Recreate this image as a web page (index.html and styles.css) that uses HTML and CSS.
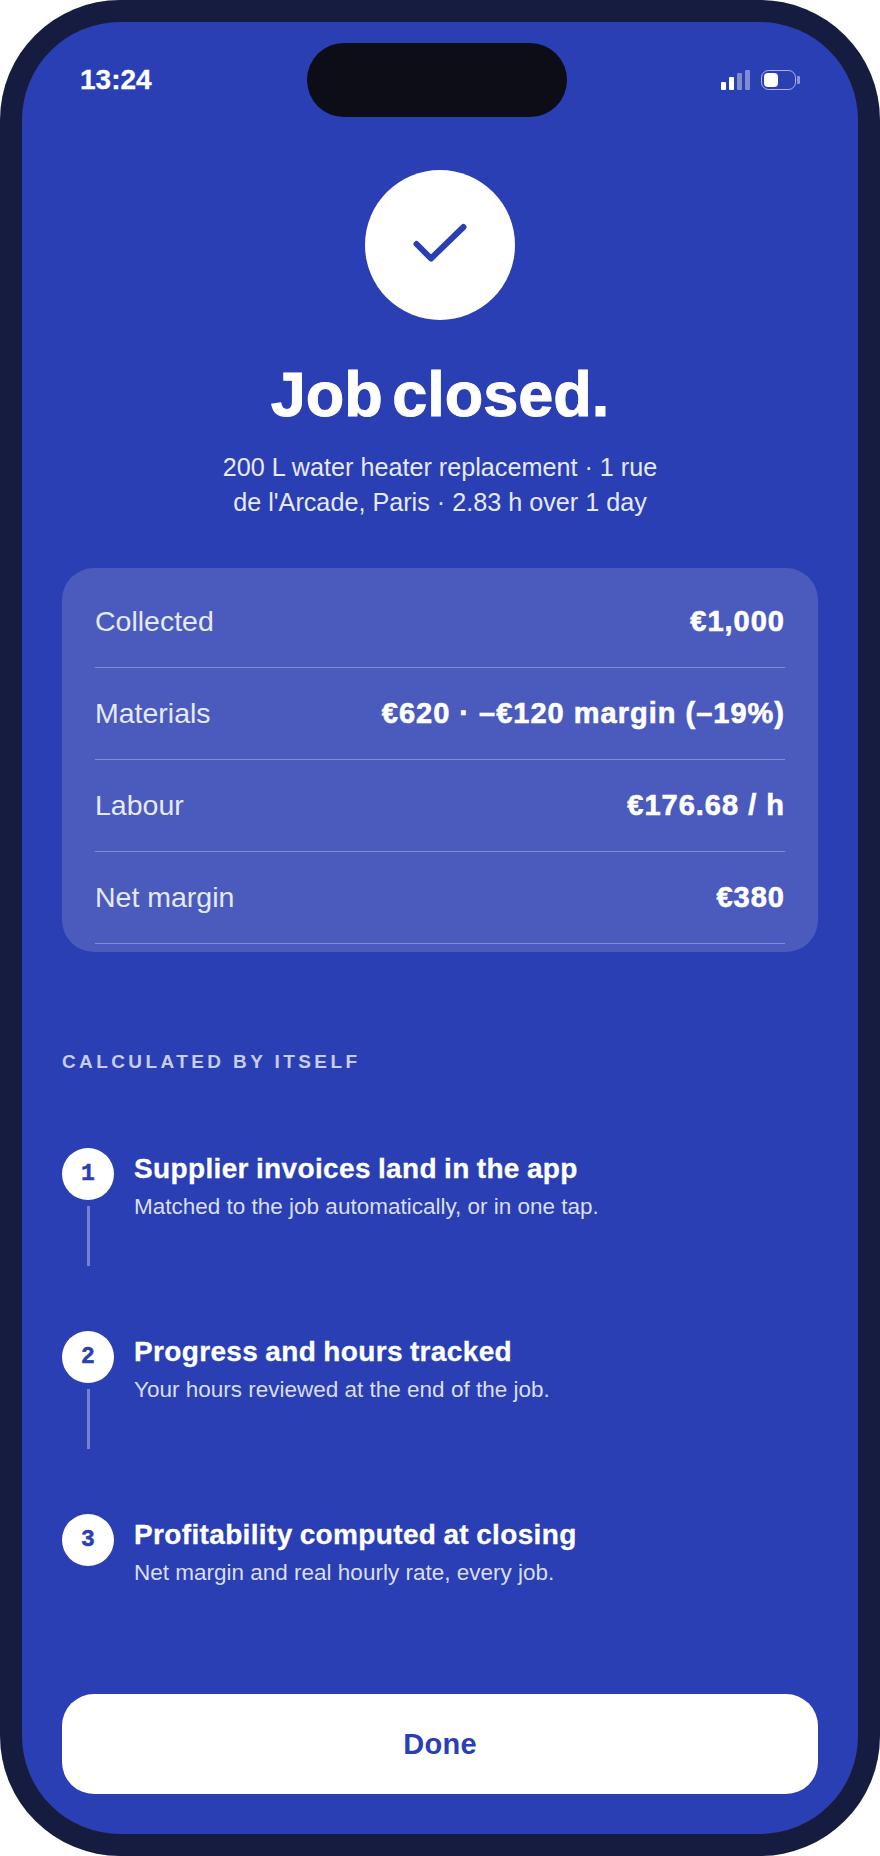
FILE: index.html
```html
<!DOCTYPE html>
<html lang="en">
<head>
    <meta charset="UTF-8">
    <title>Job closed</title>
    <link rel="stylesheet" href="styles.css">
</head>
<body>
    <div class="phone">
        <div class="screen">
            <div class="island"></div>

            <div class="status">
                <span class="time">13:24</span>
                <div class="status-icons">
                    <svg class="signal" width="29" height="20" viewBox="0 0 29 20">
                        <rect x="0" y="12" width="5" height="8" rx="1" fill="#fff"/>
                        <rect x="8" y="7" width="5" height="13" rx="1" fill="#fff"/>
                        <rect x="16" y="3" width="5" height="17" rx="1" fill="#fff" opacity="0.4"/>
                        <rect x="24" y="0" width="5" height="20" rx="1" fill="#fff" opacity="0.4"/>
                    </svg>
                    <svg class="battery" width="39" height="20" viewBox="0 0 39 20">
                        <rect x="0.5" y="0.5" width="34" height="19" rx="7" fill="none" stroke="#fff" stroke-opacity="0.6"/>
                        <rect x="3" y="3" width="14" height="14" rx="4" fill="#fff"/>
                        <rect x="36" y="6" width="3" height="8" rx="1" fill="#fff" opacity="0.45"/>
                    </svg>
                </div>
            </div>

            <div class="hero">
                <div class="check">
                    <svg width="60" height="50" viewBox="0 0 60 50">
                        <path d="M6.5 24 L21 38.5 L53.5 7" fill="none" stroke="#2a3fb3" stroke-width="6" stroke-linecap="round" stroke-linejoin="round"/>
                    </svg>
                </div>
                <h1>Job closed.</h1>
                <p class="subtitle">200 L water heater replacement · 1 rue<br>de l'Arcade, Paris · 2.83 h over 1 day</p>
            </div>

            <div class="summary">
                <div class="row"><span>Collected</span><strong>€1,000</strong></div>
                <div class="row"><span>Materials</span><strong>€620 · –€120 margin (–19%)</strong></div>
                <div class="row"><span>Labour</span><strong>€176.68 / h</strong></div>
                <div class="row"><span>Net margin</span><strong>€380</strong></div>
            </div>

            <div class="section-label">CALCULATED BY ITSELF</div>

            <div class="steps">
                <div class="step">
                    <div class="marker">
                        <div class="num">1</div>
                        <div class="line"></div>
                    </div>
                    <div class="step-text">
                        <div class="step-title">Supplier invoices land in the app</div>
                        <div class="step-desc">Matched to the job automatically, or in one tap.</div>
                    </div>
                </div>
                <div class="step">
                    <div class="marker">
                        <div class="num">2</div>
                        <div class="line"></div>
                    </div>
                    <div class="step-text">
                        <div class="step-title">Progress and hours tracked</div>
                        <div class="step-desc">Your hours reviewed at the end of the job.</div>
                    </div>
                </div>
                <div class="step">
                    <div class="marker">
                        <div class="num">3</div>
                    </div>
                    <div class="step-text">
                        <div class="step-title">Profitability computed at closing</div>
                        <div class="step-desc">Net margin and real hourly rate, every job.</div>
                    </div>
                </div>
            </div>

            <button class="done">Done</button>
        </div>
    </div>
</body>
</html>
```

FILE: styles.css
```css
* {
    box-sizing: border-box;
}
body {
    margin: 0;
    background-color: #fff;
    font-family: "Liberation Sans", Arial, sans-serif;
}
.phone {
    width: 880px;
    height: 1856px;
    padding: 22px;
    background-color: #161c40;
    border-radius: 120px;
}
.screen {
    position: relative;
    display: flex;
    flex-direction: column;
    height: 1812px;
    padding: 0 40px;
    background-color: #2a3fb3;
    border-radius: 98px;
    color: #fff;
    overflow: hidden;
}
.island {
    position: absolute;
    top: 21px;
    left: 285px;
    width: 260px;
    height: 74px;
    background-color: #0c0d16;
    border-radius: 37px;
}
.status {
    display: flex;
    justify-content: space-between;
    align-items: center;
    height: 20px;
    margin-top: 48px;
    padding: 0 18px 0 18px;
}
.time {
    font-size: 28px;
    font-weight: bold;
    -webkit-text-stroke: 0.3px #fff;
}
.status-icons {
    display: flex;
    align-items: center;
    gap: 11px;
}
.status-icons svg {
    display: block;
}
.hero {
    display: flex;
    flex-direction: column;
    align-items: center;
    margin-top: 80px;
}
.check {
    display: flex;
    align-items: center;
    justify-content: center;
    width: 150px;
    height: 150px;
    background-color: #fff;
    border-radius: 50%;
}
h1 {
    margin: 36px 0 0;
    font-size: 63px;
    line-height: 76px;
    font-weight: bold;
    word-spacing: -8px;
    -webkit-text-stroke: 1px #fff;
}
.subtitle {
    margin: 18px 0 0;
    font-size: 25.2px;
    line-height: 35px;
    text-align: center;
    color: #e6e9f7;
}
.summary {
    margin-top: 48px;
    padding: 8px 33px;
    background-color: #4a5bbd;
    border-radius: 32px;
}
.row {
    display: flex;
    justify-content: space-between;
    align-items: center;
    height: 92px;
    border-bottom: 1px solid rgba(255,255,255,0.3);
    font-size: 28.5px;
}
.row span {
    color: #e6e9f7;
}
.row strong {
    font-size: 29px;
    letter-spacing: 1px;
    -webkit-text-stroke: 0.6px #fff;
}
.section-label {
    margin-top: 98px;
    font-size: 19px;
    line-height: 24px;
    font-weight: bold;
    letter-spacing: 3.4px;
    color: #c6cded;
}
.steps {
    margin-top: 74px;
}
.step {
    display: flex;
    gap: 20px;
    height: 183px;
}
.marker {
    display: flex;
    flex-direction: column;
    align-items: center;
    width: 52px;
}
.num {
    display: flex;
    align-items: center;
    justify-content: center;
    width: 52px;
    height: 52px;
    background-color: #fff;
    border-radius: 50%;
    font-family: "Liberation Mono", monospace;
    font-size: 23px;
    font-weight: bold;
    color: #2a3fb3;
    -webkit-text-stroke: 0.5px #2a3fb3;
}
.line {
    width: 3px;
    height: 60px;
    margin-top: 6px;
    background-color: #7383cf;
}
.step-text {
    padding-top: 4px;
}
.step-title {
    font-size: 28px;
    line-height: 34px;
    font-weight: bold;
    letter-spacing: 0.35px;
    word-spacing: -1px;
    -webkit-text-stroke: 0.3px #fff;
}
.step-desc {
    margin-top: 6px;
    font-size: 22.5px;
    line-height: 30px;
    color: #d9def3;
}
.done {
    height: 100px;
    margin-top: -3px;
    background-color: #fff;
    border: none;
    border-radius: 32px;
    font-family: inherit;
    font-size: 29px;
    font-weight: bold;
    letter-spacing: 0.3px;
    color: #2a3fb3;
    cursor: pointer;
}
```
